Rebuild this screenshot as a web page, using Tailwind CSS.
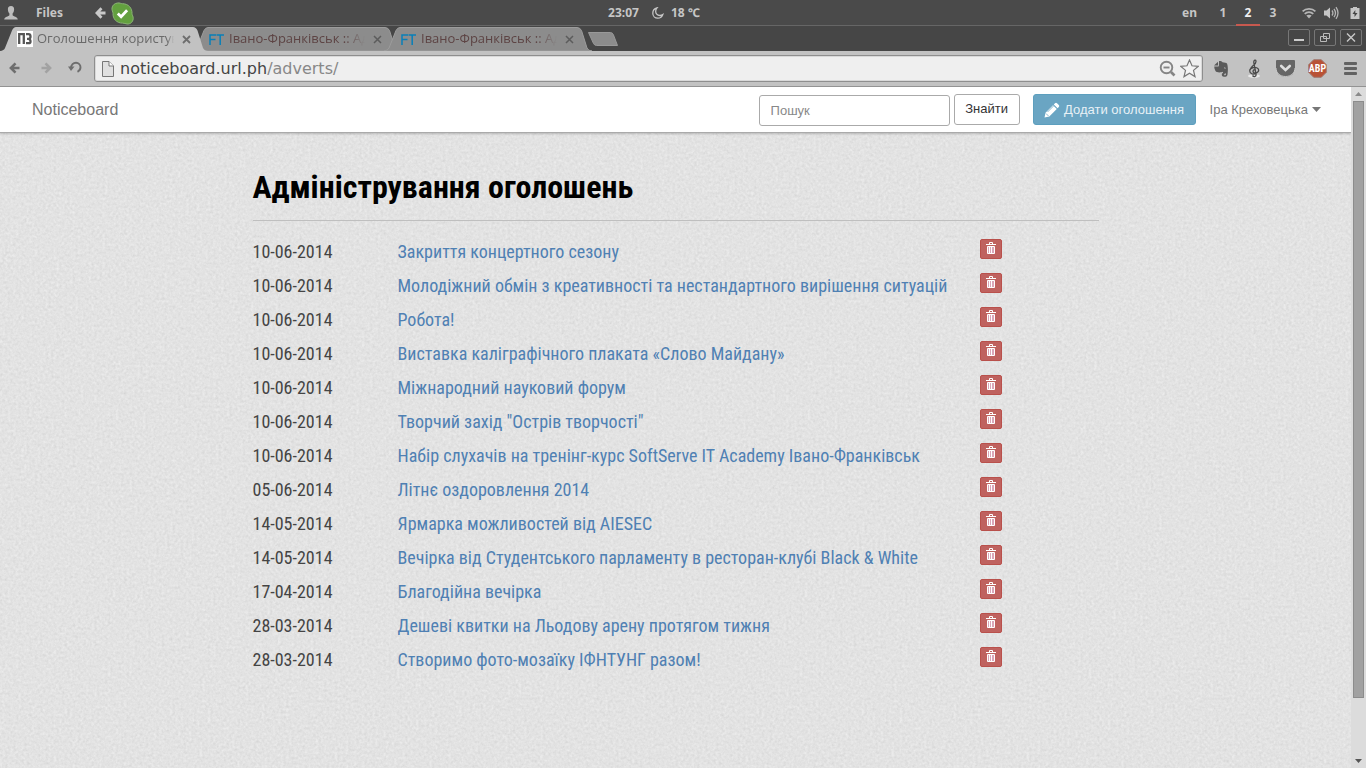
<!DOCTYPE html>
<html lang="uk">
<head>
<meta charset="utf-8">
<meta name="viewport" content="width=device-width, initial-scale=1">
<title>Оголошення користувачів</title>
<script src="https://cdn.jsdelivr.net/npm/@tailwindcss/browser@4"></script>
</head>
<body class="flex h-screen flex-col overflow-hidden bg-[#e2e2e2]">

<!-- Desktop panel -->
<div class="grid h-[26px] shrink-0 grid-cols-[1fr_auto_1fr] items-center border-b border-[#666] bg-[#4a4a4a] font-['Noto_Sans',sans-serif] text-[12px] font-bold text-[#c6c6c6]">
  <div class="flex items-center">
    <svg class="ml-1 h-[14px] w-[14px]" viewBox="0 0 14 14" fill="#bdbdbd"><path d="M7 0C4.800 0 3.800 1.500 3.900 3.500 4 5.500 4.600 6.700 5.400 7.500v1.800C4.500 10.600.6 10.600.2 13.400h13.600C13.400 10.600 9.500 10.600 8.600 9.300V7.500C9.400 6.700 10 5.500 10.100 3.500 10.200 1.500 9.200 0 7 0z"/></svg>
    <span class="ml-[18px]">Files</span>
    <svg class="ml-8 h-3 w-3" viewBox="0 0 12 12" fill="none" stroke="#c9c9c9" stroke-width="2.800"><path d="M6.500 1.300 1.900 6l4.600 4.700M2.500 6h8"/></svg>
    <svg class="ml-1 h-[23px] w-[23px]" viewBox="0 0 23 23"><path d="M6.500 1C9 .6 9.600 1.700 11.500 1.700c6 0 9.800 4.600 9.500 9.900 0 1.700 1.400 2.500 1.200 5.200-.3 3.400-3.300 5.600-6.200 5.200-1.600-.2-2.500-.9-4.500-.9C5.500 21.100 1.600 16.600 2 11.300 2 9.500.7 8.700 1 6 1.300 3.300 3.500 1.400 6.500 1z" fill="#63a03f" stroke="#8cb477" stroke-width="1"/><path d="m6.800 11.500 3.300 3.300 6-6.500" fill="none" stroke="#fff" stroke-width="2.800"/></svg>
  </div>
  <div class="flex items-center pr-[58px] whitespace-nowrap">
    <span>23:07</span>
    <svg class="ml-[13px] h-3 w-3" viewBox="0 0 12 12" fill="none" stroke="#c6c6c6" stroke-width="1.300"><path d="M5 .8C2.500 1.400.8 3.600.8 6.200c0 2.900 2.200 5 5 5 2.300 0 4.300-1.400 5-3.600-1 .7-1.900.9-2.900.9C5.200 8.500 3.500 6.500 3.700 4c.1-1.300.5-2.300 1.300-3.200z"/></svg>
    <span class="ml-[7px]">18 ℃</span>
  </div>
  <div class="flex h-[26px] items-center justify-end">
    <span class="mr-[5px]">en</span>
    <span class="ml-2 flex h-[26px] w-[26px] items-center justify-center">1</span>
    <span class="flex h-[26px] w-6 items-center justify-center border-b-2 border-[#c8594f] pt-[2px] text-[#f0f0f0]">2</span>
    <span class="flex h-[26px] w-[26px] items-center justify-center">3</span>
    <svg class="ml-4 h-[12px] w-[14px]" viewBox="0 0 14 12" fill="none" stroke="#b5b5b5" stroke-width="1.700"><path d="M.6 4.400C4 .9 10 .9 13.400 4.400M2.700 6.900c2.400-2.400 6.200-2.400 8.600 0"/><path d="M4.300 8.600c1.500-1.300 3.900-1.300 5.400 0L7 11.400z" fill="#b5b5b5" stroke="none"/></svg>
    <svg class="ml-2 h-[14px] w-[15px]" viewBox="0 0 15 14"><path d="M0 4.500h2.500L6 1.500v11L2.500 9.500H0z" fill="#c6c6c6"/><path d="M8 4.500q1.800 2.500 0 5M10 2.800q3 4.200 0 8.400M12 1.200q4 5.800 0 11.600" fill="none" stroke="#b5b5b5" stroke-width="1.300"/></svg>
    <svg class="mr-[6px] ml-[11px] h-3 w-[10px]" viewBox="0 0 10 12"><path d="M3 0h4v1h2.500v11H.5V1H3z" fill="#c6c6c6"/><path d="M5.300 3 2.500 7h2v3L7.500 6h-2.200z" fill="#444"/></svg>
  </div>
</div>

<!-- Tab strip -->
<div class="flex h-[25px] shrink-0 items-end bg-[#464646] font-['Open_Sans',sans-serif] text-[13px]">
  <div class="relative z-10 flex h-6 w-[208px] shrink-0 items-center pr-[16px] pl-[17px] text-[#6a6a6a]">
    <svg class="absolute inset-0 h-full w-full" viewBox="0 0 208 24" preserveAspectRatio="none"><path d="M0 24q4-.5 5-3L12 3.500Q13.500 0 16 0h177q3 0 4.500 3.500L203 21q1.500 3 5 3z" fill="#c2c2c2"/></svg>
    <svg class="relative h-4 w-4 shrink-0" viewBox="0 0 16 16"><path fill="#fff" d="M0 0h16v16H0z"/><path d="M2.200 13V3.200H6.800V13M9 3.200h2.500q2 0 2 2.200t-2 2.500q2 .3 2 2.500t-2 1.700H9M10 7.900h2" fill="none" stroke="#555" stroke-width="2.300"/></svg>
    <span class="relative ml-1 w-[137px] overflow-hidden mask-r-from-95% mask-r-to-100% whitespace-nowrap">Оголошення користув</span>
    <button class="relative ml-2 h-[9px] w-[9px]" aria-label="Закрити вкладку"><svg class="h-full w-full" viewBox="0 0 9 9" stroke="#6e6e6e" stroke-width="1.800"><path d="m1 1 7 7M8 1 1 8"/></svg></button>
  </div>
  <div class="relative -ml-4 flex h-6 w-[208px] shrink-0 items-center pr-[16px] pl-[16px] text-[#5d4444]">
    <svg class="absolute inset-0 h-full w-full" viewBox="0 0 208 24" preserveAspectRatio="none"><path d="M0 24q4-.5 5-3L12 3.500Q13.500.5 16 .5h177q3 0 4.500 3L203 21q1.500 3 5 3z" fill="#8c8c8c" stroke="#9c9c9c"/></svg>
    <svg class="relative ml-px h-[11px] w-[15px] shrink-0" viewBox="0 0 15 11" fill="none" stroke="#087fb8" stroke-width="1.500"><path d="M1 11V1h6M1 5.500h5.500M7.500 1H15M11.200 1v10"/></svg>
    <span class="relative ml-[5px] w-[136px] overflow-hidden mask-r-from-85% mask-r-to-100% whitespace-nowrap">Івано-Франківськ :: Ад</span>
    <button class="relative ml-2 h-[9px] w-[9px]" aria-label="Закрити вкладку"><svg class="h-full w-full" viewBox="0 0 9 9" stroke="#5c5c5c" stroke-width="1.500"><path d="m1 1 7 7M8 1 1 8"/></svg></button>
  </div>
  <div class="relative -ml-4 flex h-6 w-[208px] shrink-0 items-center pr-[16px] pl-[16px] text-[#5d4444]">
    <svg class="absolute inset-0 h-full w-full" viewBox="0 0 208 24" preserveAspectRatio="none"><path d="M0 24q4-.5 5-3L12 3.500Q13.500.5 16 .5h177q3 0 4.500 3L203 21q1.500 3 5 3z" fill="#8c8c8c" stroke="#9c9c9c"/></svg>
    <svg class="relative ml-px h-[11px] w-[15px] shrink-0" viewBox="0 0 15 11" fill="none" stroke="#087fb8" stroke-width="1.500"><path d="M1 11V1h6M1 5.500h5.500M7.500 1H15M11.200 1v10"/></svg>
    <span class="relative ml-[5px] w-[136px] overflow-hidden mask-r-from-85% mask-r-to-100% whitespace-nowrap">Івано-Франківськ :: Ад</span>
    <button class="relative ml-2 h-[9px] w-[9px]" aria-label="Закрити вкладку"><svg class="h-full w-full" viewBox="0 0 9 9" stroke="#5c5c5c" stroke-width="1.500"><path d="m1 1 7 7M8 1 1 8"/></svg></button>
  </div>
  <button class="mb-[5px] -ml-1 h-[14px] w-[30px]" aria-label="Нова вкладка"><svg class="h-full w-full" viewBox="0 0 30 14"><path d="M.5.500h22q2 0 3 2.500l4 10.500h-21q-2 0-3-2z" fill="#8c8c8c" stroke="#999"/></svg></button>
  <div class="mr-1 mb-[5px] ml-auto flex gap-1">
    <button class="h-[17px] w-[22px] rounded-[2px] border border-[#777]" aria-label="Згорнути"><svg class="h-full w-full" viewBox="0 0 20 15"><path d="M5 9h10v2H5z" fill="#ccc"/></svg></button>
    <button class="h-[17px] w-[22px] rounded-[2px] border border-[#777]" aria-label="Відновити"><svg class="h-full w-full" viewBox="0 0 20 15" fill="none" stroke="#bbb"><path d="M8.500 3.500h6v5h-6zM5.500 6.500h6v5h-6z"/></svg></button>
    <button class="h-[17px] w-[22px] rounded-[2px] border border-[#777]" aria-label="Закрити"><svg class="h-full w-full" viewBox="0 0 20 15" stroke="#c8c8c8" stroke-width="1.400"><path d="m6 3.500 8 8M14 3.500l-8 8"/></svg></button>
  </div>
</div>

<!-- Browser toolbar -->
<div class="flex h-9 shrink-0 items-center border-b border-[#939393] bg-[#c2c2c2]">
  <button class="mb-[2px] ml-[9px] h-3 w-3" aria-label="Назад"><svg class="h-full w-full" viewBox="0 0 12 12" fill="none" stroke="#6e6e6e" stroke-width="2.600"><path d="M6.500 1.300 1.900 6l4.600 4.700M2.500 6h8"/></svg></button>
  <button class="mb-[2px] ml-[19px] h-3 w-3" aria-label="Вперед"><svg class="h-full w-full" viewBox="0 0 12 12" fill="none" stroke="#a2a2a2" stroke-width="2.600"><path d="M5.500 1.300 10.100 6l-4.600 4.700M9.500 6h-8"/></svg></button>
  <button class="mb-[2px] ml-4 h-[13px] w-[14px]" aria-label="Оновити"><svg class="h-full w-full" viewBox="0 0 14 13"><path d="M3 7.500C3 3.500 5.500 1.800 8 1.800c2.600 0 4.500 2 4.500 4.500 0 2-1 3.500-3 4.500" fill="none" stroke="#6e6e6e" stroke-width="1.900"/><path d="M0 5.500h6.500L3 10z" fill="#6e6e6e"/></svg></button>
  <div class="ml-3 flex h-[27px] flex-1 items-center rounded-[3px] border border-[#8e8e8e] bg-[#efefef] pr-[3px] shadow-[inset_0_0_0_1px_#d8d8d8]">
    <svg class="ml-[6px] h-4 w-[13px]" viewBox="0 0 13 16"><path d="M1.500.500h6.500l4.500 4.500v10.500h-11z" fill="#e0e0e0" stroke="#777"/><path d="M8 .5V5h4.500" fill="#fff" stroke="#777"/></svg>
    <div class="ml-[6px] flex-1 font-['DejaVu_Sans',sans-serif] text-[16px] leading-5 text-[#888]"><span class="text-[#444]">noticeboard.url.ph</span>/adverts/</div>
    <button class="h-[17px] w-[17px]" aria-label="Масштаб"><svg class="h-full w-full" viewBox="0 0 17 17" fill="none" stroke="#858585" stroke-width="1.900"><circle cx="7.500" cy="7.500" r="5.800"/><path d="M4.500 7.500h6"/><path d="m12 12 3.500 3.500" stroke-width="2.600"/></svg></button>
    <button class="ml-1 h-[19px] w-[19px]" aria-label="Додати закладку"><svg class="h-full w-full" viewBox="0 0 19 19"><path d="m9.500 1 2.500 5.800 6.300.5-4.800 4.100 1.500 6.200-5.500-3.400L4 17.600l1.500-6.200L.7 7.300 7 6.800z" fill="#f3f3f3" stroke="#777" stroke-width="1.200"/></svg></button>
  </div>
  <button class="ml-[11px] h-4 w-[14px]" aria-label="Evernote"><svg class="h-full w-full" viewBox="0 0 14 16"><path d="M0 4.500 4 .8V4.500zM5 0c2 0 3 .5 3.500 1.200 2 .2 4 .4 4.600 1.500 1 3 .9 7.500.4 11-.4 1.700-2 2.300-3.500 2.100-1.800 0-2.200-1-2.200-2.200 0-1.500 1.200-2.100 2.900-1.900v1.500c-1 0-1.200.8-.2 1 1.200.1 1.500-.6 1.500-1.800-2 .5-3-.3-3.300-1.600C7.500 11.500 2.600 12 1.500 10 .6 8.500.3 7 .2 5.500h4.300C5 5.300 5 3 5 0z" fill="#5a5a5a"/><path d="M10 6.500q1.500-.5 2 1.200-1-.6-2-.2z" fill="#c2c2c2"/></svg></button>
  <button class="ml-5 h-[19px] w-[12px]" aria-label="Музика"><svg class="h-full w-full" viewBox="0 0 12 19" fill="none" stroke="#4a4a4a" stroke-width="1.300"><ellipse cx="6" cy="17" rx="6" ry="1.800" fill="#e8e8e8" stroke="none"/><path d="M7.500 11C5 9.800 4 13.500 6.500 14c3.500.5 5-2.500 3.500-4.300C8 7.300 2 8.500 1.700 11.500 1.500 15 6 16 8 14M4.500 16.500c1.500 2 4 1 3.500-1.500L5.800 3.500C5.500 1 8 0 8 2.500 8 6 3 6.500 1.700 11.500"/></svg></button>
  <button class="ml-4 h-[17px] w-[19px]" aria-label="Pocket"><svg class="h-full w-full" viewBox="0 0 19 17"><path d="M1 0h17Q19 0 19 1V8c0 5-4 9-9.500 9S0 13 0 8V1Q0 0 1 0z" fill="#666"/><path d="M0 8c0 5 4 8.500 9.500 8.500S19 13 19 8" fill="none" stroke="#ddd" stroke-width=".8"/><path d="m5.200 6 4.300 4 4.300-4" fill="none" stroke="#ddd" stroke-width="2.600" stroke-linecap="round"/></svg></button>
  <button class="relative ml-[13px] flex h-[19px] w-[19px] items-center justify-center" aria-label="Adblock Plus"><svg class="absolute inset-0 h-full w-full" viewBox="0 0 19 19"><path d="M5.700.7h7.600l5 5v7.600l-5 5H5.700l-5-5V5.700z" fill="#b95236" stroke="#a07a70" stroke-width="1"/></svg><span class="relative font-['Roboto_Condensed',Roboto,sans-serif] text-[10px] leading-none font-bold text-white">ABP</span></button>
  <button class="mr-[9px] ml-[17px] flex h-[13px] w-[13px] flex-col justify-between" aria-label="Меню"><span class="h-[3px] w-full rounded-[1px] bg-[#626262]"></span><span class="h-[3px] w-full rounded-[1px] bg-[#626262]"></span><span class="h-[3px] w-full rounded-[1px] bg-[#626262]"></span></button>
</div>

<!-- Page viewport -->
<div class="flex min-h-0 flex-1">
  <div class="relative isolate min-w-0 flex-1 overflow-hidden">
    <svg class="absolute inset-0 -z-10 h-full w-full" aria-hidden="true">
      <filter id="paper" x="0" y="0" width="100%" height="100%" color-interpolation-filters="sRGB">
        <feTurbulence type="fractalNoise" baseFrequency="0.370" numOctaves="3" seed="7"/>
        <feColorMatrix values="0.080 0.060 0 0 0.818  0.080 0.060 0 0 0.818  0.080 0.060 0 0 0.818  0 0 0 0 1"/>
      </filter>
      <rect width="100%" height="100%" filter="url(#paper)"/>
    </svg>

    <nav class="flex h-[46px] items-center border-b border-[#aaa] bg-white pr-[30px] pl-8 font-['Liberation_Sans',sans-serif] text-[13px] shadow-[0_1px_2px_#0003]">
      <a href="#" class="text-[16px] text-[#777]">Noticeboard</a>
      <form class="ml-auto flex items-start gap-1">
        <input type="search" aria-label="Пошук" placeholder="Пошук" class="mt-px h-[31px] w-[191px] rounded-[3px] border border-[#aaa] bg-white px-[11px] text-[13px] placeholder:text-[#888]">
        <button type="button" class="h-[31px] w-[66px] rounded-[3px] border border-[#aaa] bg-white text-[#333]">Знайти</button>
      </form>
      <a href="#" class="ml-[13px] flex h-[31px] w-[163px] items-center justify-center rounded-[3px] border border-[#5d9fbe] bg-[#6aa5c3] text-[#e8f1f6]">
        <svg class="mr-1 h-4 w-4" viewBox="0 0 16 16" fill="#fff"><path d="M11 1.200q1-1 2 0l1.800 1.800q1 1 0 2L13.600 6.200 9.800 2.400zM9 3.200 12.800 7l-7.500 7.500-4.800 1 1-4.800z"/><path d="m3.500 10 6-6M2 11.500l2.500 2.500" stroke="#6aa5c3" stroke-width=".8"/></svg>
        Додати оголошення
      </a>
      <button class="ml-[14px] flex items-center gap-1 text-[#777]">Іра Креховецька<svg class="h-[5px] w-[9px]" viewBox="0 0 9 5"><path d="M0 0h9L4.500 5z" fill="#777"/></svg></button>
    </nav>

    <main class="mx-auto max-w-[846px] font-['Roboto_Condensed',Roboto,sans-serif]">
      <h1 class="border-b border-[#bfbfbf] pt-[33px] pb-[11px] text-[32px] leading-[43px] font-bold text-black">Адміністрування оголошень</h1>
      <table class="mt-[14px] w-full table-fixed text-left text-[18px] leading-[34px] text-[#444]">
        <colgroup><col class="w-[145px]"><col class="w-[582px]"><col></colgroup>
        <tbody id="adverts"></tbody>
      </table>
    </main>
  </div>

  <!-- Scrollbar -->
  <div class="flex w-[15px] shrink-0 flex-col items-center bg-[#dcdcdc]" aria-hidden="true">
    <div class="flex h-[14px] items-center"><svg class="h-1 w-[7px]" viewBox="0 0 7 4"><path d="M0 4 3.500 0 7 4z" fill="#8a8a8a"/></svg></div>
    <div class="w-[11px] flex-[597] border border-[#8c8c8c] bg-[#a1a1a1]"></div>
    <div class="flex flex-[65] items-end pb-[5px]"><svg class="h-1 w-[7px]" viewBox="0 0 7 4"><path d="M0 0h7L3.500 4z" fill="#555"/></svg></div>
  </div>
</div>

<template id="row">
  <tr class="h-[34px]">
    <td class="p-0"></td>
    <td class="p-0 whitespace-nowrap"><a href="#" class="text-[#4f80b3]"></a></td>
    <td class="p-0 align-top"><button class="mt-1 flex h-5 w-[22px] items-start justify-center rounded-[2px] border border-[#b9504b] bg-[#bf625f] pt-[2px]" aria-label="Видалити"><svg class="h-3 w-[10px]" viewBox="0 0 10 12" fill="none" stroke="#fff"><path d="M1.500 4.500h7v7h-7z" fill="#dba6b8"/><path d="M3.500 2V.5h3V2M0 2.500h10M3.500 5v6M5.500 5v6"/></svg></button></td>
  </tr>
</template>
<script>
const adverts = [
  ['10-06-2014', 'Закриття концертного сезону'],
  ['10-06-2014', 'Молодіжний обмін з креативності та нестандартного вирішення ситуацій'],
  ['10-06-2014', 'Робота!'],
  ['10-06-2014', 'Виставка каліграфічного плаката «Слово Майдану»'],
  ['10-06-2014', 'Міжнародний науковий форум'],
  ['10-06-2014', 'Творчий захід "Острів творчості"'],
  ['10-06-2014', 'Набір слухачів на тренінг-курс SoftServe IT Academy Івано-Франківськ'],
  ['05-06-2014', 'Літнє оздоровлення 2014'],
  ['14-05-2014', 'Ярмарка можливостей від AIESEC'],
  ['14-05-2014', 'Вечірка від Студентського парламенту в ресторан-клубі Black & White'],
  ['17-04-2014', 'Благодійна вечірка'],
  ['28-03-2014', 'Дешеві квитки на Льодову арену протягом тижня'],
  ['28-03-2014', 'Створимо фото-мозаїку ІФНТУНГ разом!']
];
const row = document.getElementById('row');
for (const [date, title] of adverts) {
  const tr = row.content.cloneNode(true);
  tr.querySelector('td').textContent = date;
  tr.querySelector('a').textContent = title;
  document.getElementById('adverts').append(tr);
}
</script>
</body>
</html>
